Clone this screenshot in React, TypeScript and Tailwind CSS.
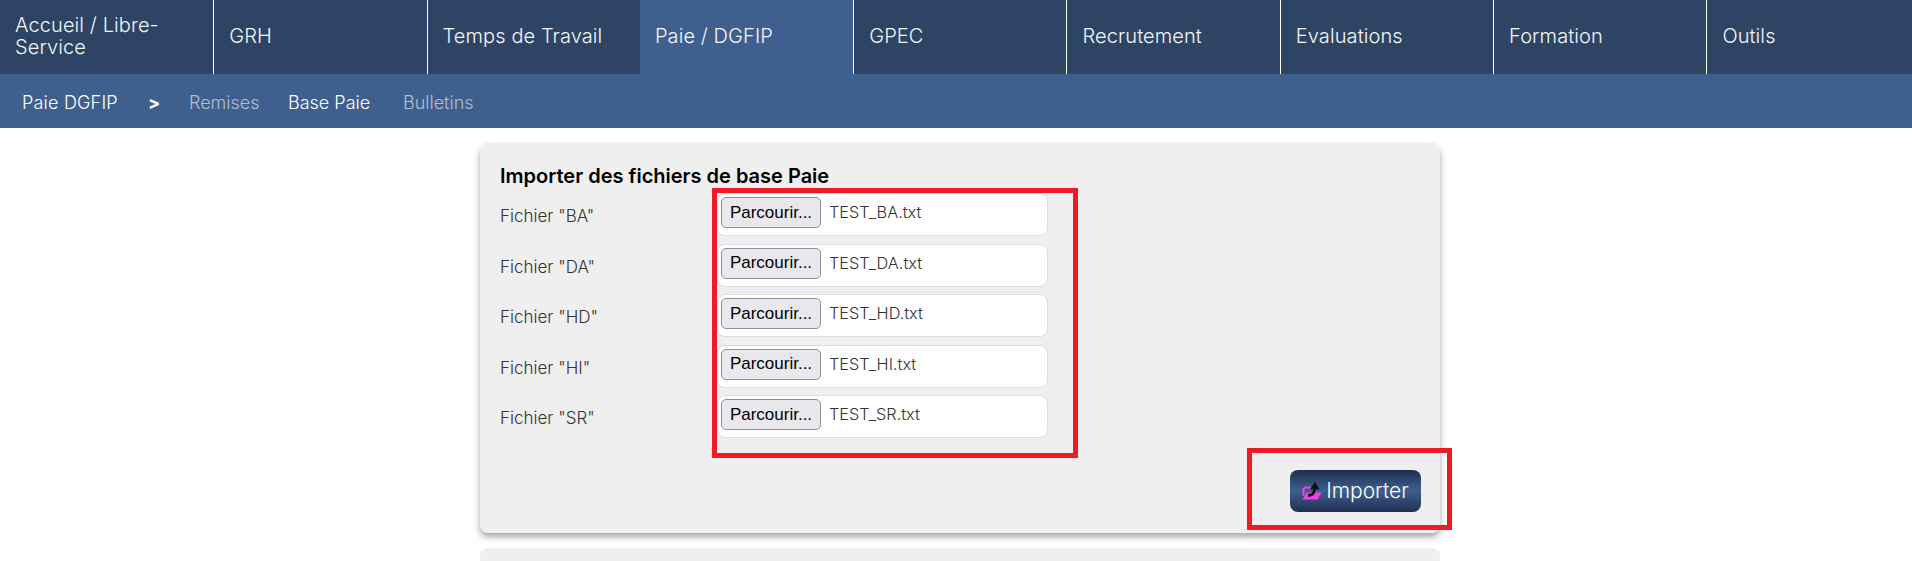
const tabs = ["Accueil / Libre-Service", "GRH", "Temps de Travail", "Paie / DGFIP", "GPEC", "Recrutement", "Evaluations", "Formation", "Outils"];
const files = ["BA", "DA", "HD", "HI", "SR"];

function FolderIcon() {
  return (
    <svg width="20" height="18" viewBox="0 0 20 18" className="shrink-0">
      <path d="M1.5 14 L1.5 7 L3 5.5 L8 5.5 L9 7 L12 7" fill="none" stroke="#f040e0" strokeWidth="2" />
      <path d="M0.5 17.5 L4.5 10.5 L19.5 10.5 L15.5 17.5 Z" fill="#f53fe4" />
      <path d="M6 13.5 C10 13.5 12.5 11 12.5 6.5" fill="none" stroke="#111" strokeWidth="2.8" />
      <path d="M8 7.5 L13 0 L17.5 7.5 Z" fill="#111" />
    </svg>
  );
}

export default function App() {
  return (
    <div className="relative h-[561px] overflow-hidden bg-white font-['Inter',sans-serif] font-light">
      <nav className="flex h-[74px] bg-[#2e4465]">
        {tabs.map((t, i) => (
          <div
            key={t}
            className={`flex w-[213.3px] shrink-0 items-center pb-[2px] pl-[15px] pr-4 text-[20px] leading-[22px] tracking-[0.1px] text-[#f4f6f8] ${i === 0 || i === 3 ? "" : "border-l border-white"} ${i === 3 ? "bg-[#3f5f8e]" : ""}`}
          >
            {t}
          </div>
        ))}
      </nav>
      <div className="flex h-[54px] items-center bg-[#3f5f8e] pl-[22px] pt-[2px] text-[18px]">
        <span className="w-[126px] tracking-[0.2px] text-white">Paie DGFIP</span>
        <span className="w-[41px] font-bold text-white">&gt;</span>
        <span className="w-[99px] text-[#b4bfd0]">Remises</span>
        <span className="w-[115px] text-white">Base Paie</span>
        <span className="text-[#b4bfd0]">Bulletins</span>
      </div>
      <main className="ml-[480px] mt-[15px] w-[960px]">
        <section className="h-[390px] rounded-lg bg-[#efefef] pl-5 pr-[19px] pt-[21px] shadow-[0_4px_6px_rgba(0,0,0,0.35)]">
          <h2 className="text-[20px] font-semibold leading-6 text-black">Importer des fichiers de base Paie</h2>
          <div className="mt-[5px] flex flex-col gap-[7.5px]">
            {files.map((f) => (
              <div key={f} className="flex h-[43px] items-start">
                <label className="w-[217px] pt-[11px] text-[17px] leading-6 text-[#333]">Fichier "{f}"</label>
                <div className="flex h-full w-[331px] items-start rounded-lg border border-[#dddddd] bg-white pl-[3px] pt-[3px]">
                  <button className="h-[31px] w-[100px] rounded-[5px] border border-[#8f8f9d] bg-[#e9e9ed] font-['Liberation_Sans',sans-serif] text-[17px] font-normal text-black">
                    Parcourir...
                  </button>
                  <span className="ml-2 text-[16.3px] leading-[30px] text-[#333]">TEST_{f}.txt</span>
                </div>
              </div>
            ))}
          </div>
          <div className="mt-[32px] flex justify-end">
            <button className="flex h-[42px] w-[131px] items-center justify-center gap-[4px] rounded-lg bg-[linear-gradient(#1f3050,#3f5f8e_50%,#1f3050)] text-[21px] text-white">
              <FolderIcon />
              Importer
            </button>
          </div>
        </section>
        <section className="mt-[15px] h-[40px] rounded-lg bg-[#efefef]" />
      </main>
      <div className="absolute left-[712px] top-[188px] h-[270px] w-[366px] border-[5px] border-[#ed1c24]" />
      <div className="absolute left-[1247px] top-[448px] h-[82px] w-[205px] border-[5px] border-[#ed1c24]" />
    </div>
  );
}
